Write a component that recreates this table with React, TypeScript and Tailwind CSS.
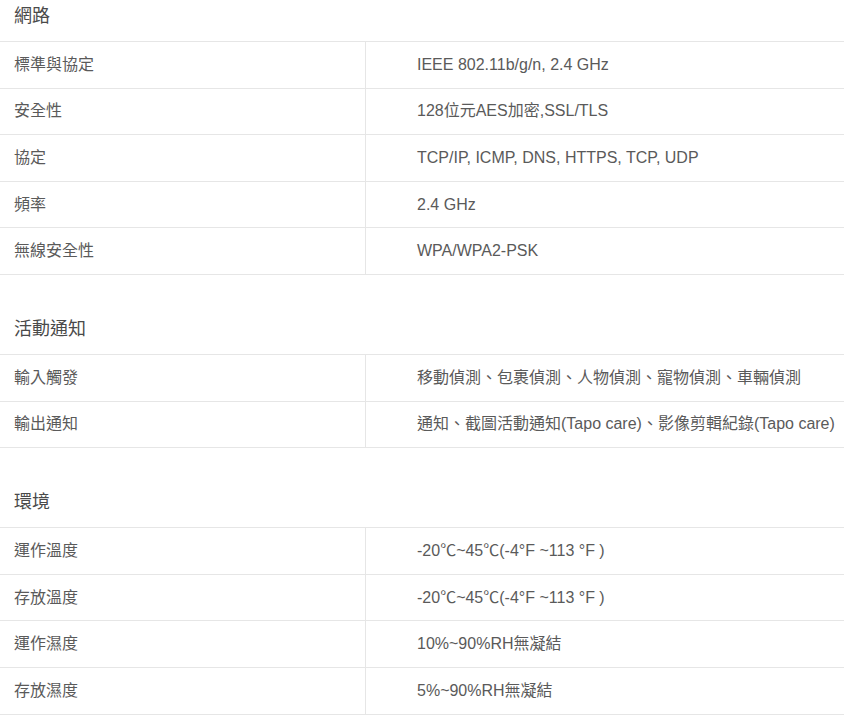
type Row = { label: string; value: string };

type Section = { title: string; rows: Row[] };

const sections: Section[] = [
  {
    title: "網路",
    rows: [
      { label: "標準與協定", value: "IEEE 802.11b/g/n, 2.4 GHz" },
      { label: "安全性", value: "128位元AES加密,SSL/TLS" },
      { label: "協定", value: "TCP/IP, ICMP, DNS, HTTPS, TCP, UDP" },
      { label: "頻率", value: "2.4 GHz" },
      { label: "無線安全性", value: "WPA/WPA2-PSK" },
    ],
  },
  {
    title: "活動通知",
    rows: [
      { label: "輸入觸發", value: "移動偵測、包裹偵測、人物偵測、寵物偵測、車輛偵測" },
      { label: "輸出通知", value: "通知、截圖活動通知(Tapo care)、影像剪輯紀錄(Tapo care)" },
    ],
  },
  {
    title: "環境",
    rows: [
      { label: "運作溫度", value: "-20℃~45℃(-4°F ~113 °F )" },
      { label: "存放溫度", value: "-20℃~45℃(-4°F ~113 °F )" },
      { label: "運作濕度", value: "10%~90%RH無凝結" },
      { label: "存放濕度", value: "5%~90%RH無凝結" },
    ],
  },
];

const font = "font-['Liberation_Sans','Noto_Sans_CJK_TC',sans-serif]";

export default function App() {
  return (
    <div className={`w-[844px] bg-white text-[#5a5a5a] ${font}`}>
      {sections.map((section, si) => (
        <div key={section.title} className={si > 0 ? "mt-[38px]" : ""}>
          <h3 className="h-[41px] pl-[14px] pt-[3px] text-[18px] leading-[26px] font-normal text-[#4a4a4a]">
            {section.title}
          </h3>
          <div className="border-t border-[#e6e6e6]">
            {section.rows.map((row) => (
              <div key={row.label} className="grid grid-cols-[366px_1fr] h-[46.6px] border-b border-[#e6e6e6]">
                <div className="flex items-center pl-[14px] text-[16px] border-r border-[#e6e6e6]">{row.label}</div>
                <div className="flex items-center pl-[51px] text-[16px] whitespace-nowrap">{row.value}</div>
              </div>
            ))}
          </div>
        </div>
      ))}
    </div>
  );
}
